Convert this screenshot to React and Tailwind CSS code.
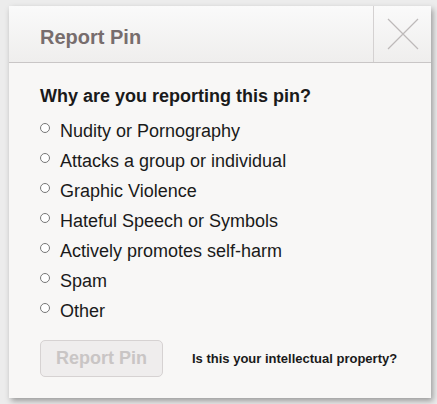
import { useState } from 'react';

const reasons = [
  'Nudity or Pornography',
  'Attacks a group or individual',
  'Graphic Violence',
  'Hateful Speech or Symbols',
  'Actively promotes self-harm',
  'Spam',
  'Other',
];

export default function App() {
  const [reason, setReason] = useState(null);

  return (
    <div
      className="w-[437px] h-[404px] bg-[#ececec] pt-[6px] pl-[9px] overflow-hidden"
      style={{ fontFamily: '"Liberation Sans", Arial, sans-serif' }}
    >
      <div className="w-[422px] h-[392px] bg-[#f8f7f6] shadow-[2px_3px_6px_rgba(0,0,0,0.35)] flex flex-col">
        {/* Header */}
        <div className="h-[57px] flex border-b border-[#c9c6c6] bg-gradient-to-b from-[#fafafa] to-[#efeeed]">
          <h2 className="flex-1 pl-[31px] pt-[16px] text-[20px] font-bold text-[#776d6d]">Report Pin</h2>
          <button className="w-[58px] border-l border-[#d4d1d1] flex items-center justify-center">
            <svg width="32" height="32" viewBox="0 0 32 32">
              <path d="M1 1 L31 31 M31 1 L1 31" stroke="#bdb9b9" strokeWidth="1.2" fill="none" />
            </svg>
          </button>
        </div>

        {/* Body */}
        <div className="pl-[31px] pr-4 pt-[23px]">
          <h3 className="text-[18px] font-bold text-[#1a1a1a] leading-[21px]">Why are you reporting this pin?</h3>
          <div className="mt-[9px] flex flex-col">
            {reasons.map((r) => (
              <label key={r} className="h-[30px] flex items-center gap-[10px] text-[18px] text-[#1a1a1a] cursor-pointer">
                <input
                  type="radio"
                  name="reason"
                  checked={reason === r}
                  onChange={() => setReason(r)}
                  className="w-[10px] h-[10px] m-0 -mt-[6px]"
                />
                {r}
              </label>
            ))}
          </div>

          <div className="mt-[14px] flex items-center gap-[29px]">
            <button
              disabled={!reason}
              className="w-[123px] h-[37px] rounded-[5px] border border-[#d6d2d2] bg-[#efeded] text-[18px] font-bold text-[#c9c5c5]"
            >
              Report Pin
            </button>
            <a className="text-[13px] font-bold text-[#1a1a1a]">Is this your intellectual property?</a>
          </div>
        </div>
      </div>
    </div>
  );
}
